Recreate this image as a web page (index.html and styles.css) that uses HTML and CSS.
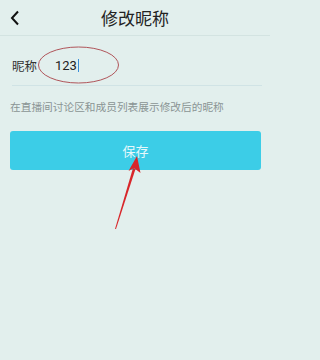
FILE: index.html
```html
<!DOCTYPE html>
<html lang="zh">
<head>
<meta charset="utf-8">
<link rel="stylesheet" href="styles.css">
</head>
<body>
<div class="page">
  <header class="bar">
    <svg class="back" width="10" height="16" viewBox="0 0 10 16"><path d="M8 1.5 L2 8 L8 14.5" fill="none" stroke="#111" stroke-width="2"/></svg>
    <h1 class="title">修改昵称</h1>
  </header>
  <div class="row">
    <span class="label">昵称</span>
    <span class="value">123<i class="cursor"></i></span>
  </div>
  <p class="hint">在直播间讨论区和成员列表展示修改后的昵称</p>
  <div class="btn">保存</div>
  <svg class="mark" width="270" height="360" viewBox="0 0 270 360">
    <ellipse cx="78.5" cy="65" rx="40" ry="18" fill="none" stroke="#b0555a" stroke-width="1"/>
    <path d="M115 229 L133 168 L135.5 169 L116 229 Z" fill="#d8262a"/>
    <path d="M137 156 L140.5 173 L134 168 L128.5 171 Z" fill="#d8262a"/>
  </svg>
</div>
</body>
</html>
```
FILE: styles.css
```css
html, body { margin: 0; padding: 0; }
body { background: #e2efed; font-family: "Noto Sans CJK SC", "Noto Sans", sans-serif; }
.page { position: relative; width: 270px; height: 360px; overflow: hidden; }
.bar { height: 35px; border-bottom: 1px solid #d3e3e1; display: flex; align-items: center; justify-content: center; position: relative; }
.back { position: absolute; left: 10px; top: 10px; }
.title { margin: 0; font-size: 17px; font-weight: 400; color: #222; line-height: 20px; }
.row { margin: 0 8px 0 12px; padding-top: 9px; height: 40px; border-bottom: 1px solid #d0e3e5; display: flex; align-items: center; }
.label { font-size: 12.5px; color: #333; width: 43px; }
.value { font-family: Roboto, "Noto Sans", sans-serif; font-size: 13px; color: #222; display: flex; align-items: center; }
.cursor { display: inline-block; width: 1px; height: 13px; background: #3b8fd8; margin-left: 1px; }
.hint { margin: 14px 0 0 10px; font-size: 10.7px; color: #8a9494; line-height: 14px; }
.btn { margin: 17px 9px 0 10px; height: 39px; border-radius: 3px; background: #3ccde7; color: #e6f8fb; font-size: 13px; display: flex; align-items: center; justify-content: center; }
.mark { position: absolute; left: 0; top: 0; pointer-events: none; }
```
